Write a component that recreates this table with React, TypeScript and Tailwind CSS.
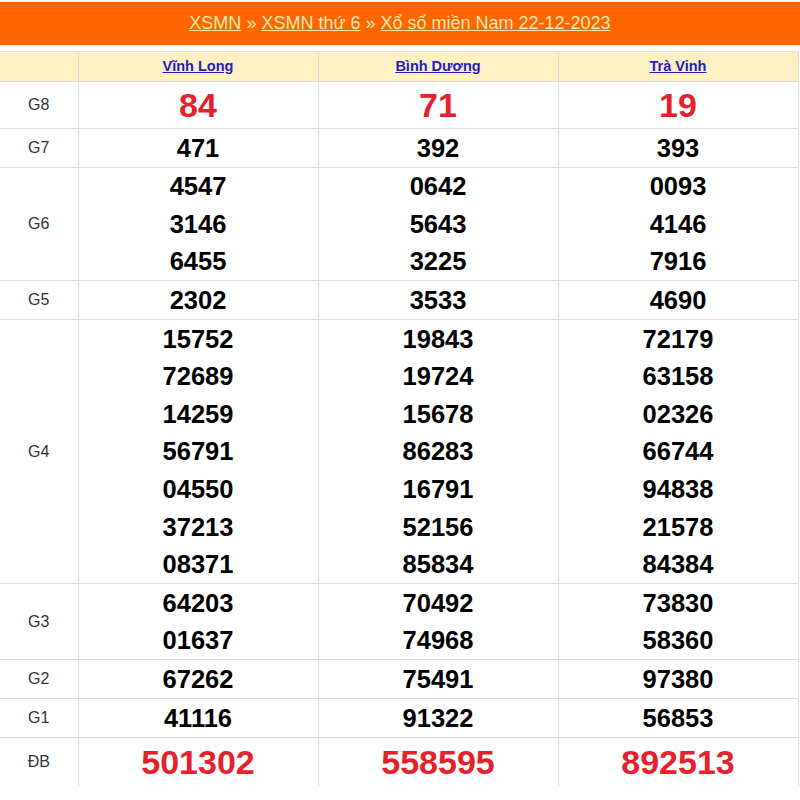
import React from "react";

type Row = {label: string; values: string[][]; big?: boolean; h?: string};

const PROVINCES = ["Vĩnh Long", "Bình Dương", "Trà Vinh"];

const ROWS: Row[] = [
    {label: "G8", values: [["84"], ["71"], ["19"]], big: true, h: "h-[46px]"},
    {label: "G7", values: [["471"], ["392"], ["393"]]},
    {label: "G6", values: [["4547", "3146", "6455"], ["0642", "5643", "3225"], ["0093", "4146", "7916"]]},
    {label: "G5", values: [["2302"], ["3533"], ["4690"]]},
    {
        label: "G4",
        values: [
            ["15752", "72689", "14259", "56791", "04550", "37213", "08371"],
            ["19843", "19724", "15678", "86283", "16791", "52156", "85834"],
            ["72179", "63158", "02326", "66744", "94838", "21578", "84384"],
        ],
    },
    {label: "G3", values: [["64203", "01637"], ["70492", "74968"], ["73830", "58360"]]},
    {label: "G2", values: [["67262"], ["75491"], ["97380"]]},
    {label: "G1", values: [["41116"], ["91322"], ["56853"]]},
    {label: "ĐB", values: [["501302"], ["558595"], ["892513"]], big: true, h: "h-[49px]"},
];

export default function App() {
    return (
        <div className="w-[800px] h-[800px] bg-white pt-[2px] font-['Liberation_Sans',Arial,sans-serif]">
            <div className="h-[43px] bg-[#ff6600] flex items-center justify-center text-[18px] text-[#ffe7b0]">
                <a className="underline">XSMN</a>
                <span className="mx-[5px]">»</span>
                <a className="underline">XSMN thứ 6</a>
                <span className="mx-[5px]">»</span>
                <a className="underline">Xổ số miền Nam 22-12-2023</a>
            </div>

            <table className="mt-[6px] w-[798px] table-fixed border-collapse">
                <colgroup>
                    <col className="w-[78px]"/>
                    <col className="w-[240px]"/>
                    <col className="w-[240px]"/>
                    <col className="w-[240px]"/>
                </colgroup>
                <thead>
                    <tr className="bg-[#fff1c4] h-[30px]">
                        <th className="border border-l-0 border-[#e0ddd8]"></th>
                        {PROVINCES.map((p) => (
                            <th key={p} className="border border-[#e0ddd8] text-center text-[14.5px] font-bold text-[#1d1dc0]">
                                <a className="underline">{p}</a>
                            </th>
                        ))}
                    </tr>
                </thead>
                <tbody>
                    {ROWS.map((row, i) => {
                        const last = i === ROWS.length - 1;
                        const cell = `border border-[#e0ddd8] text-center align-middle p-0 ${last ? "border-b-0" : ""}`;
                        return (
                            <tr key={row.label}>
                                <td className={`${cell} border-l-0 text-[16px] text-[#333]`}>{row.label}</td>
                                {row.values.map((col, c) => (
                                    <td key={c} className={cell}>
                                        {col.map((n, k) =>
                                            row.big ? (
                                                <div key={k} className={`${row.h} flex items-center justify-center text-[34px] font-bold text-[#e4222b]`}>
                                                    {n}
                                                </div>
                                            ) : (
                                                <div key={k} className="h-[37.6px] flex items-center justify-center text-[25.5px] font-bold text-black">
                                                    {n}
                                                </div>
                                            ),
                                        )}
                                    </td>
                                ))}
                            </tr>
                        );
                    })}
                </tbody>
            </table>
        </div>
    );
}
